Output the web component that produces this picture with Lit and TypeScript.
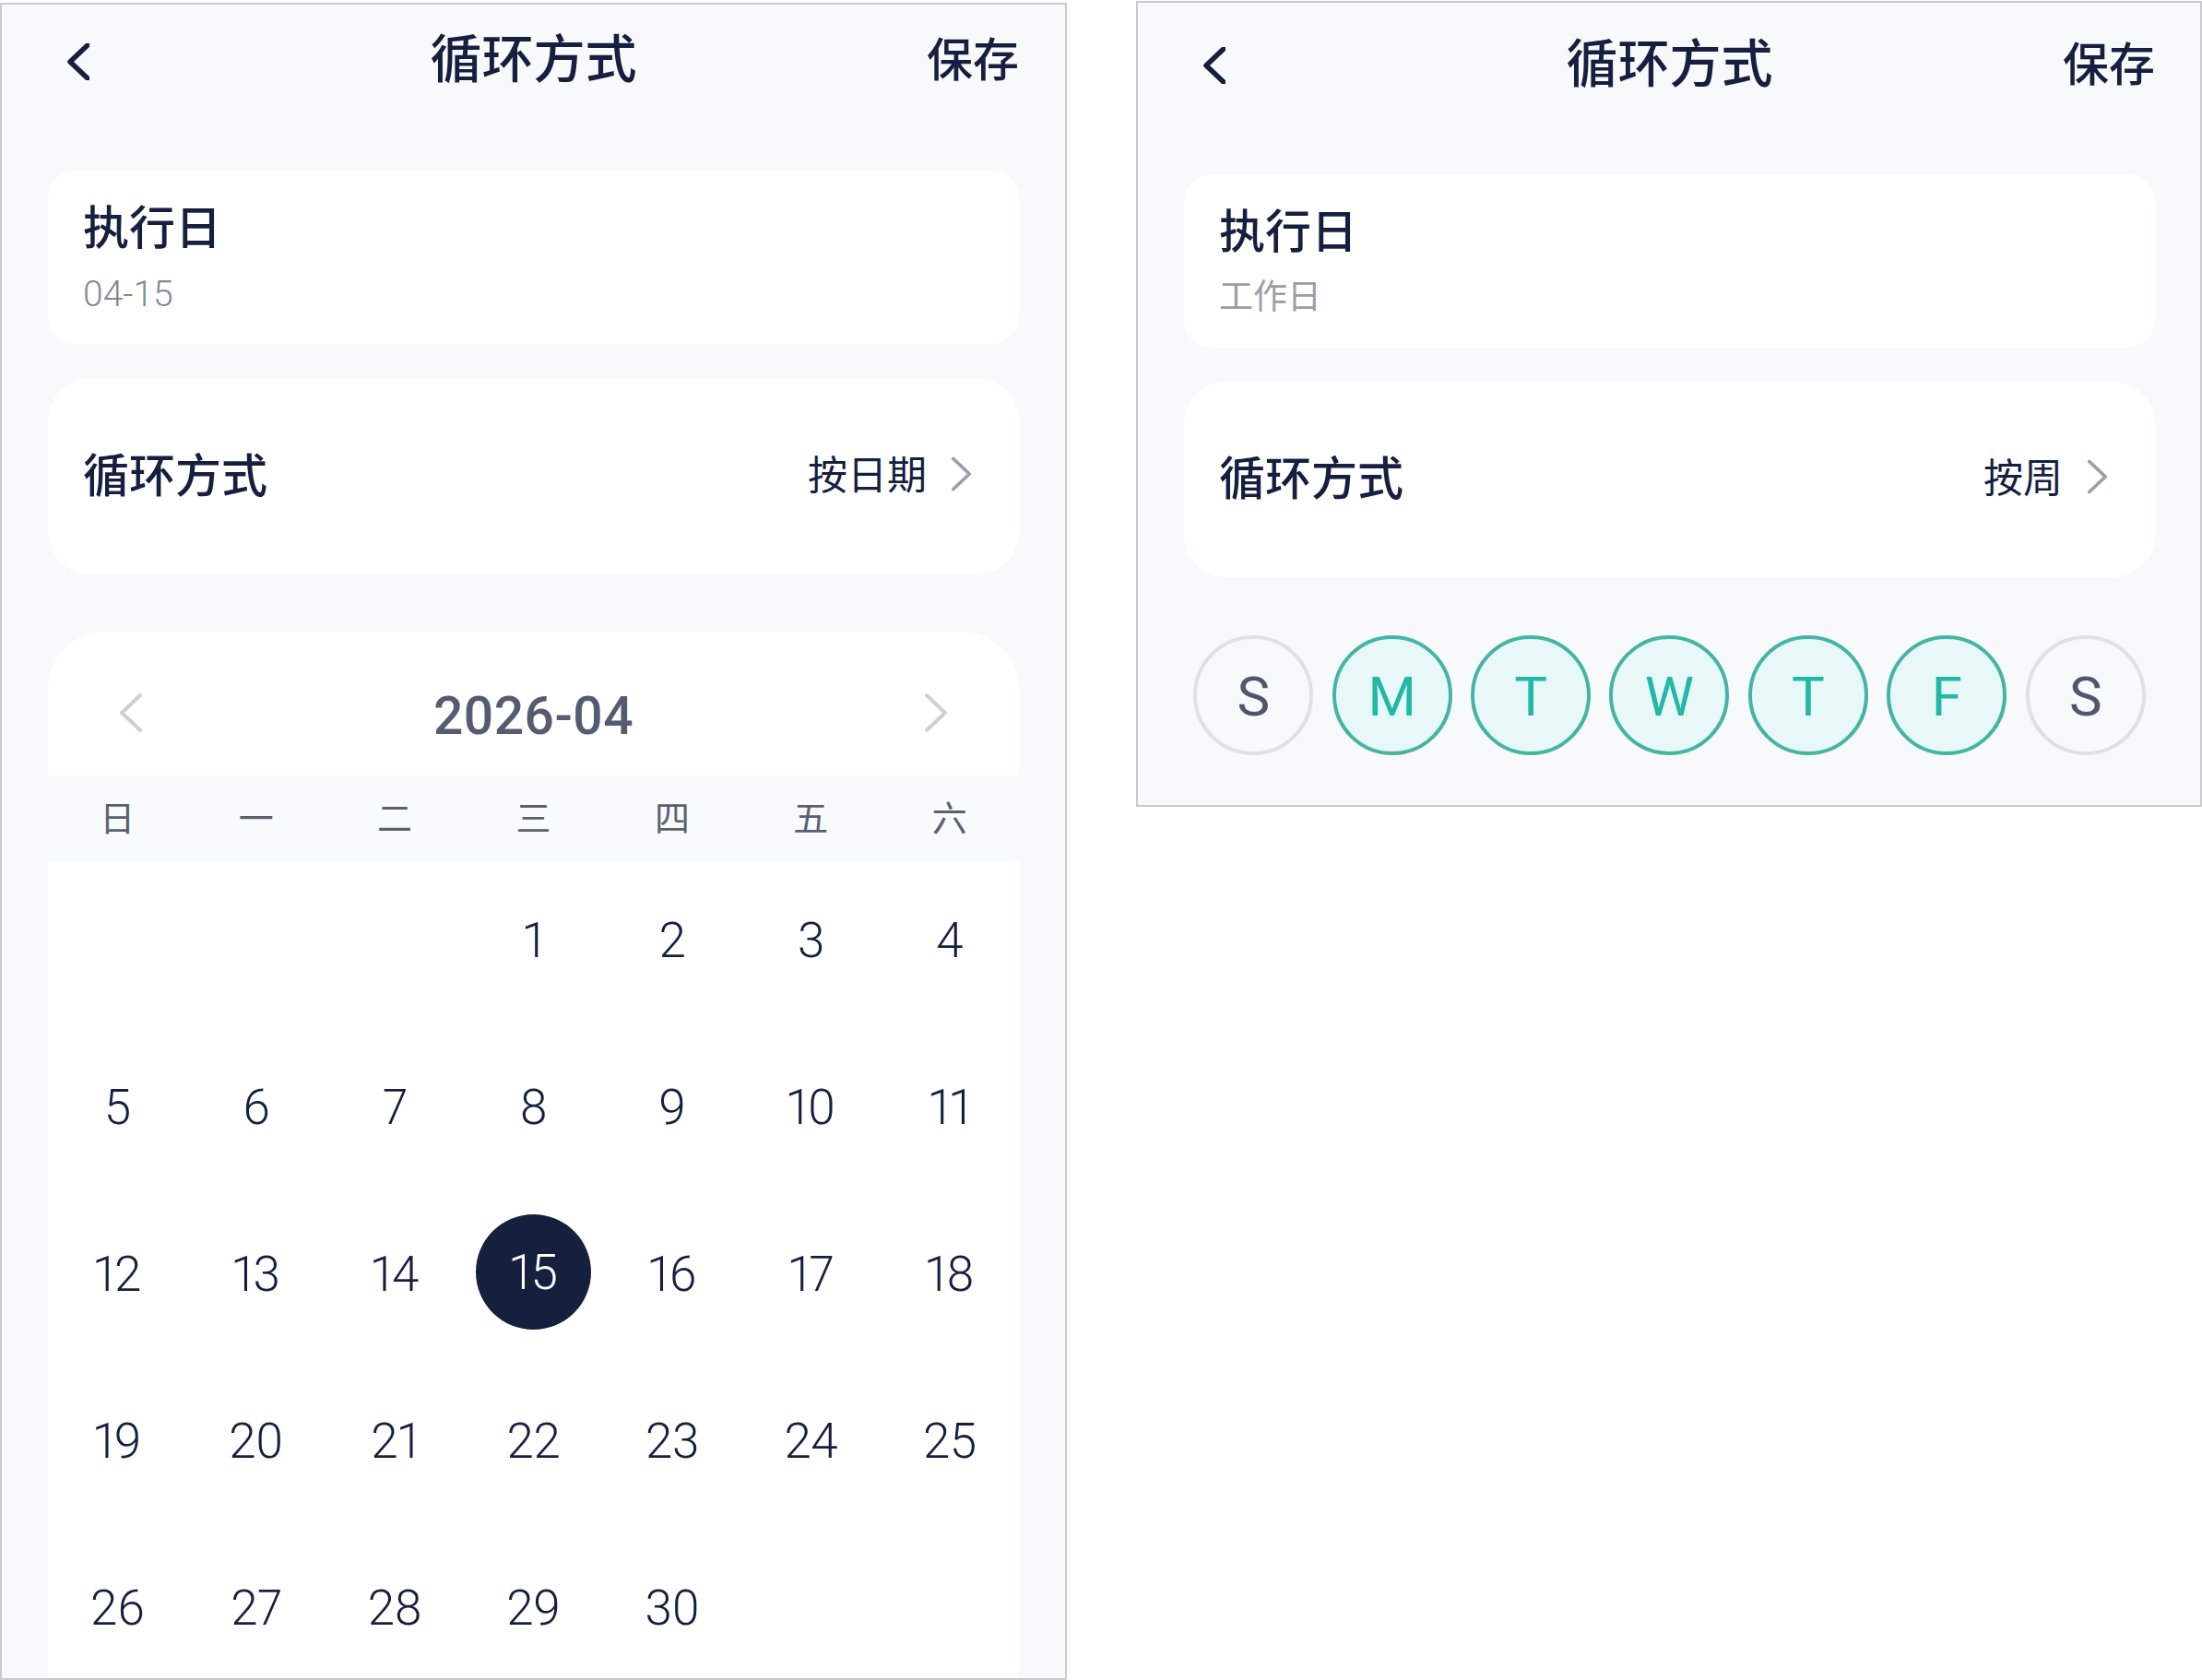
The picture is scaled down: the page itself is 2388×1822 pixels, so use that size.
import { LitElement, html, css, svg } from 'lit';
import { customElement } from 'lit/decorators.js';
import { classMap } from 'lit/directives/class-map.js';

const WEEK = ['日', '一', '二', '三', '四', '五', '六'];
const DAYS = ['S', 'M', 'T', 'W', 'T', 'F', 'S'];
const SELECTED = 15;

const chevron = (cls: string, d: string) => html`
  <svg class=${cls} viewBox="0 0 24 40" fill="none">${svg`<path d=${d} />`}</svg>
`;
const LEFT = 'M22 2 L3 20 L22 38';
const RIGHT = 'M2 2 L21 20 L2 38';

@customElement('app-root')
export class AppRoot extends LitElement {
  static styles = css`
    :host {
      display: block;
      width: 2388px;
      height: 1822px;
      overflow: hidden;
      background: #fff;
      font-family: 'Roboto', 'Noto Sans CJK SC', sans-serif;
      color: #161f3f;
    }
    .page {
      display: flex;
      justify-content: space-between;
      align-items: flex-start;
    }
    .panel {
      box-sizing: border-box;
      width: 1156px;
      padding: 0 50px;
      background: #f7f9fa;
      border: 2px solid #c9cacd;
      overflow: hidden;
    }
    .panel.date {
      margin-top: 3px;
      height: 1819px;
      width: 1157px;
    }
    .panel.week {
      margin-top: 1px;
      height: 874px;
      padding-right: 49px;
    }
    .nav {
      display: grid;
      grid-template-columns: 1fr auto 1fr;
      align-items: center;
    }
    .date .nav {
      height: 118px;
      margin-bottom: 62px;
    }
    .week .nav {
      height: 131px;
      margin-bottom: 55px;
    }
    .nav h1 {
      margin: 0 0 9px;
      font-size: 56px;
      font-weight: 500;
    }
    .back {
      width: 24px;
      height: 40px;
      margin: 5px 0 0 21px;
      stroke: #161f3f;
      stroke-width: 5.5;
      stroke-linecap: round;
      stroke-linejoin: round;
    }
    .save {
      justify-self: end;
      padding-bottom: 6px;
      font-size: 50px;
      font-weight: 500;
    }
    .card {
      background: #fff;
    }
    .exec {
      box-sizing: border-box;
      height: 188px;
      border-radius: 30px;
      padding: 31px 38px 0;
    }
    .exec .label {
      font-size: 50px;
      font-weight: 500;
      line-height: 64px;
    }
    .exec .sub {
      margin-top: 7px;
      font-size: 37px;
      line-height: 64px;
      color: #9c9ea6;
    }
    .exec .sub.num {
      font-size: 39px;
      font-weight: 300;
      color: #85878f;
    }
    .mode {
      box-sizing: border-box;
      height: 213px;
      margin-top: 37px;
      border-radius: 46px;
      padding: 0 51px 10px 38px;
      display: flex;
      align-items: center;
    }
    .week .mode {
      height: 212px;
    }
    .mode .label {
      flex: 1;
      font-size: 50px;
      font-weight: 500;
    }
    .mode .value {
      font-size: 43px;
    }
    .mode .go {
      width: 22px;
      height: 38px;
      margin: 4px 0 0 27px;
      stroke: #9a9dab;
      stroke-width: 4;
      stroke-linecap: round;
      stroke-linejoin: round;
    }
    .calendar {
      margin-top: 62px;
      border-radius: 62px 62px 0 0;
      height: 1200px;
    }
    .month {
      height: 156px;
      box-sizing: border-box;
      padding: 27px 77px 0 77px;
      display: flex;
      align-items: center;
      justify-content: space-between;
      font-size: 57px;
      font-weight: 500;
      letter-spacing: 0.5px;
      color: #565c70;
    }
    .month svg {
      width: 25px;
      height: 42px;
      margin-bottom: 8px;
      stroke: #cfd0d3;
      stroke-width: 4;
      stroke-linecap: round;
      stroke-linejoin: round;
    }
    .weekdays,
    .dates,
    .repeat {
      display: grid;
      grid-template-columns: repeat(7, 1fr);
      justify-items: center;
      align-items: center;
    }
    .weekdays {
      box-sizing: border-box;
      height: 93px;
      padding-bottom: 7px;
      background: #f8fbfb;
      font-size: 38px;
      color: #5a6072;
    }
    .dates {
      padding-top: 21px;
      row-gap: 56px;
      font-size: 53px;
      font-weight: 300;
      letter-spacing: -0.5px;
      font-variant-numeric: proportional-nums;
    }
    .dates span {
      box-sizing: border-box;
      width: 125px;
      height: 125px;
      padding-top: 5px;
      border-radius: 50%;
      display: flex;
      align-items: center;
      justify-content: center;
    }
    .dates .on {
      padding-top: 1px;
      background: #15203f;
      color: #fff;
    }
    .repeat {
      margin-top: 63px;
    }
    .repeat span {
      box-sizing: border-box;
      width: 130px;
      height: 130px;
      padding-top: 2px;
      border-radius: 50%;
      border: 4px solid #e0e1e3;
      color: #50566e;
      font-size: 60px;
      display: flex;
      align-items: center;
      justify-content: center;
    }
    .repeat .on {
      border-color: #45b5a3;
      background: #e8f8f9;
      color: #21b8a5;
    }
  `;

  private renderTop(sub: string, value: string, subIsNumber: boolean) {
    return html`
      <div class="nav">
        ${chevron('back', LEFT)}
        <h1>循环方式</h1>
        <span class="save">保存</span>
      </div>
      <div class="card exec">
        <div class="label">执行日</div>
        <div class=${classMap({ sub: true, num: subIsNumber })}>${sub}</div>
      </div>
      <div class="card mode">
        <span class="label">循环方式</span>
        <span class="value">${value}</span>
        ${chevron('go', RIGHT)}
      </div>
    `;
  }

  private renderCalendar() {
    const blanks = [0, 1, 2];
    const days = Array.from({ length: 30 }, (_, i) => i + 1);
    return html`
      <div class="card calendar">
        <div class="month">
          ${chevron('', LEFT)}
          <span>2026-04</span>
          ${chevron('', RIGHT)}
        </div>
        <div class="weekdays">${WEEK.map((w) => html`<div>${w}</div>`)}</div>
        <div class="dates">
          ${blanks.map(() => html`<span></span>`)}
          ${days.map((d) => html`<span class=${classMap({ on: d === SELECTED })}>${d}</span>`)}
        </div>
      </div>
    `;
  }

  render() {
    return html`
      <div class="page">
        <section class="panel date">
          ${this.renderTop('04-15', '按日期', true)} ${this.renderCalendar()}
        </section>
        <section class="panel week">
          ${this.renderTop('工作日', '按周', false)}
          <div class="repeat">
            ${DAYS.map(
              (d, i) => html`<span class=${classMap({ on: i > 0 && i < 6 })}>${d}</span>`
            )}
          </div>
        </section>
      </div>
    `;
  }
}
